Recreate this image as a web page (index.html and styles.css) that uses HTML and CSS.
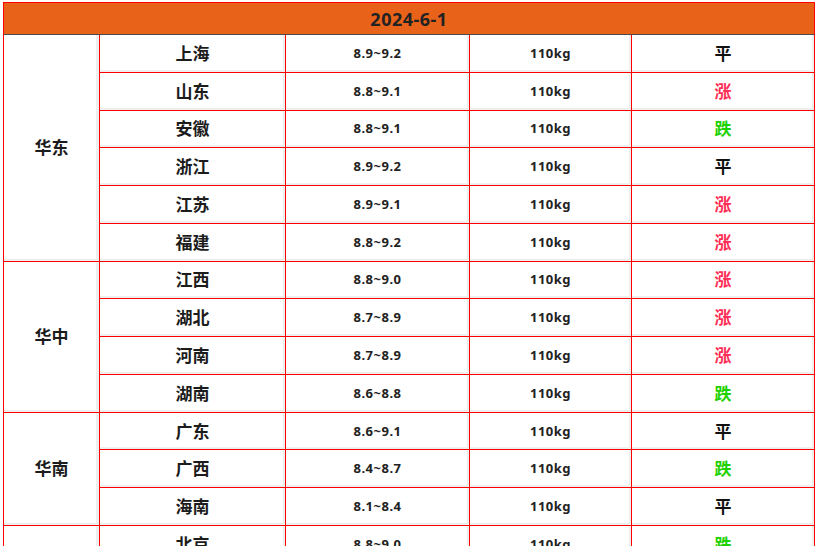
FILE: index.html
```html
<!DOCTYPE html>
<html lang="zh">
<head>
<meta charset="utf-8">
<title>2024-6-1</title>
<link rel="stylesheet" href="styles.css">
</head>
<body>
<table class="price-table">
  <colgroup>
    <col class="c-region"><col class="c-prov"><col class="c-price"><col class="c-weight"><col class="c-trend">
  </colgroup>
  <thead>
    <tr><th colspan="5" class="date">2024-6-1</th></tr>
  </thead>
  <tbody>
    <tr><td rowspan="6" class="region">华东</td><td class="prov">上海</td><td class="num">8.9~9.2</td><td class="num">110kg</td><td class="trend flat">平</td></tr>
    <tr><td class="prov">山东</td><td class="num">8.8~9.1</td><td class="num">110kg</td><td class="trend up">涨</td></tr>
    <tr><td class="prov">安徽</td><td class="num">8.8~9.1</td><td class="num">110kg</td><td class="trend down">跌</td></tr>
    <tr><td class="prov">浙江</td><td class="num">8.9~9.2</td><td class="num">110kg</td><td class="trend flat">平</td></tr>
    <tr><td class="prov">江苏</td><td class="num">8.9~9.1</td><td class="num">110kg</td><td class="trend up">涨</td></tr>
    <tr><td class="prov">福建</td><td class="num">8.8~9.2</td><td class="num">110kg</td><td class="trend up">涨</td></tr>
    <tr><td rowspan="4" class="region">华中</td><td class="prov">江西</td><td class="num">8.8~9.0</td><td class="num">110kg</td><td class="trend up">涨</td></tr>
    <tr><td class="prov">湖北</td><td class="num">8.7~8.9</td><td class="num">110kg</td><td class="trend up">涨</td></tr>
    <tr><td class="prov">河南</td><td class="num">8.7~8.9</td><td class="num">110kg</td><td class="trend up">涨</td></tr>
    <tr><td class="prov">湖南</td><td class="num">8.6~8.8</td><td class="num">110kg</td><td class="trend down">跌</td></tr>
    <tr><td rowspan="3" class="region">华南</td><td class="prov">广东</td><td class="num">8.6~9.1</td><td class="num">110kg</td><td class="trend flat">平</td></tr>
    <tr><td class="prov">广西</td><td class="num">8.4~8.7</td><td class="num">110kg</td><td class="trend down">跌</td></tr>
    <tr><td class="prov">海南</td><td class="num">8.1~8.4</td><td class="num">110kg</td><td class="trend flat">平</td></tr>
    <tr><td rowspan="3" class="region">华北</td><td class="prov">北京</td><td class="num">8.8~9.0</td><td class="num">110kg</td><td class="trend down">跌</td></tr>
    <tr><td class="prov">天津</td><td class="num">8.8~9.0</td><td class="num">110kg</td><td class="trend flat">平</td></tr>
    <tr><td class="prov">河北</td><td class="num">8.7~9.0</td><td class="num">110kg</td><td class="trend flat">平</td></tr>
  </tbody>
</table>
</body>
</html>
```
FILE: styles.css
```css
html, body {
  margin: 0;
  padding: 0;
  background: #ffffff;
}
body {
  padding: 2px 4px 0 3px;
  font-family: "Noto Sans", "Noto Sans CJK SC", sans-serif;
  color: #1c1c1c;
}
.price-table {
  width: 812px;
  border-collapse: separate;
  border-spacing: 0;
  table-layout: fixed;
  border-top: 1px solid #ff0000;
  border-left: 1px solid #ff0000;
}
.c-region { width: 96px; }
.c-prov { width: 186px; }
.c-price { width: 184px; }
.c-weight { width: 162px; }
.c-trend { width: 183px; }

.date {
  height: 32px;
  box-sizing: border-box;
  padding: 0;
  background: #e9621a;
  border-right: 1px solid #ff0000;
  border-bottom: 1px solid #4a4a4a;
  font-size: 18px;
  font-weight: 700;
  color: #222222;
  text-align: center;
  letter-spacing: 0.5px;
}
.price-table td {
  height: 37.77px;
  box-sizing: border-box;
  padding: 0;
  border-right: 1px solid #ff0000;
  border-bottom: 1px solid #ff0000;
  text-align: center;
  vertical-align: middle;
  box-shadow: inset -2px -2px 0 #efefef;
  font-weight: 700;
  line-height: 1;
}
.price-table .region {
  box-shadow: inset -3px -2px 0 #efefef;
}
.region {
  font-size: 17px;
  color: #1c1c1c;
}
.prov {
  font-size: 17px;
  color: #1c1c1c;
}
.num {
  font-size: 13px;
  letter-spacing: 0.5px;
  color: #222222;
}
.trend {
  font-size: 17px;
}
.flat { color: #111111; }
.up { color: #ff2d55; }
.down { color: #1fd100; }
```
